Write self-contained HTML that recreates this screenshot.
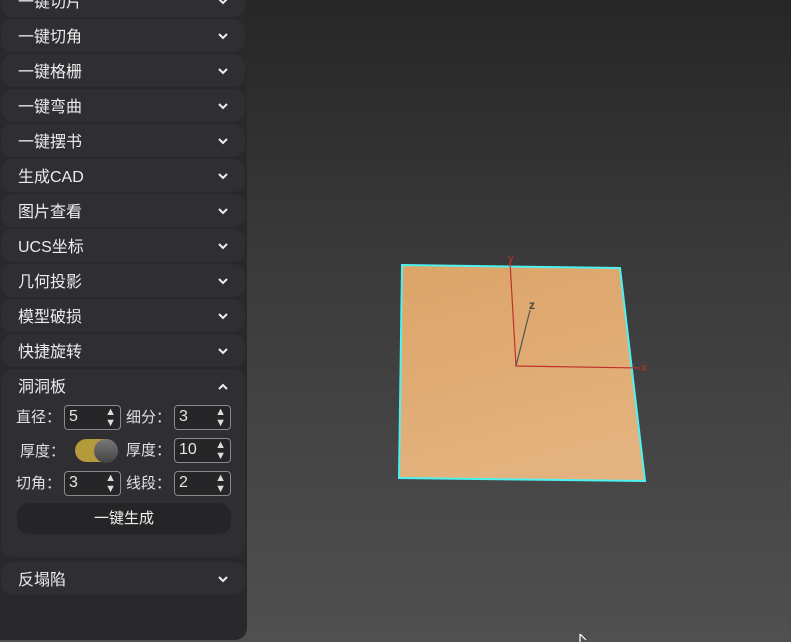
<!DOCTYPE html><html><head><meta charset="utf-8"><style>
body{margin:0;width:791px;height:642px;overflow:hidden;background:linear-gradient(#262626,#3a3a3a 40%,#505050);font-family:"Liberation Sans","Noto Sans CJK SC",sans-serif;position:relative}
.panel{position:absolute;left:0;top:-20px;width:247px;height:660px;background:#29292c;border-radius:0 0 12px 0}
.row{position:absolute;left:1px;width:244px;height:33px;background:#2f2f33;border-radius:12px;color:#ececec;font-size:16px}
.row span{position:absolute;left:17px;top:4px}
.row svg{position:absolute;right:17px;top:14px}
.exp{height:188px}
.lbl{position:absolute;color:#e0e0e0;font-size:15px}
.inp{position:absolute;width:55px;height:23px;border:1px solid #8a8a8a;border-radius:4px;background:#262628;color:#e6e6e6;font-size:16px}
.inp b{font-weight:normal;position:absolute;left:4px;top:2px}
.inp i{position:absolute;right:4px;top:1px;font-style:normal;font-size:11px;line-height:11px;color:#ddd}
.btn{position:absolute;left:16px;top:134px;width:214px;height:31px;background:#252527;border-radius:12px;color:#eee;font-size:15px;text-align:center;line-height:31px}
</style></head><body>
<div class="panel"></div>
<div class="row" style="top:-16px"><span>一键切片</span><svg width="10" height="7"><path d="M1 1l4 4 4-4" stroke="#eee" stroke-width="2" fill="none"/></svg></div>
<div class="row" style="top:19px"><span>一键切角</span><svg width="10" height="7"><path d="M1 1l4 4 4-4" stroke="#eee" stroke-width="2" fill="none"/></svg></div>
<div class="row" style="top:54px"><span>一键格栅</span><svg width="10" height="7"><path d="M1 1l4 4 4-4" stroke="#eee" stroke-width="2" fill="none"/></svg></div>
<div class="row" style="top:89px"><span>一键弯曲</span><svg width="10" height="7"><path d="M1 1l4 4 4-4" stroke="#eee" stroke-width="2" fill="none"/></svg></div>
<div class="row" style="top:124px"><span>一键摆书</span><svg width="10" height="7"><path d="M1 1l4 4 4-4" stroke="#eee" stroke-width="2" fill="none"/></svg></div>
<div class="row" style="top:159px"><span>生成CAD</span><svg width="10" height="7"><path d="M1 1l4 4 4-4" stroke="#eee" stroke-width="2" fill="none"/></svg></div>
<div class="row" style="top:194px"><span>图片查看</span><svg width="10" height="7"><path d="M1 1l4 4 4-4" stroke="#eee" stroke-width="2" fill="none"/></svg></div>
<div class="row" style="top:229px"><span>UCS坐标</span><svg width="10" height="7"><path d="M1 1l4 4 4-4" stroke="#eee" stroke-width="2" fill="none"/></svg></div>
<div class="row" style="top:264px"><span>几何投影</span><svg width="10" height="7"><path d="M1 1l4 4 4-4" stroke="#eee" stroke-width="2" fill="none"/></svg></div>
<div class="row" style="top:299px"><span>模型破损</span><svg width="10" height="7"><path d="M1 1l4 4 4-4" stroke="#eee" stroke-width="2" fill="none"/></svg></div>
<div class="row" style="top:334px"><span>快捷旋转</span><svg width="10" height="7"><path d="M1 1l4 4 4-4" stroke="#eee" stroke-width="2" fill="none"/></svg></div>
<div class="row exp" style="top:369px"><span>洞洞板</span><svg width="10" height="7"><path d="M1 6l4-4 4 4" stroke="#eee" stroke-width="2" fill="none"/></svg>
<div class="lbl" style="left:15px;top:37px">直径：</div>
<div class="inp" style="left:63px;top:36px"><b>5</b><i>▲<br>▼</i></div>
<div class="lbl" style="left:125px;top:37px">细分：</div>
<div class="inp" style="left:173px;top:36px"><b>3</b><i>▲<br>▼</i></div>
<div class="lbl" style="left:19px;top:71px">厚度：</div>
<div style="position:absolute;left:74px;top:70px;width:42px;height:23px;border-radius:12px;background:#b39a3a"></div>
<div style="position:absolute;left:93px;top:70px;width:24px;height:24px;border-radius:12px;background:linear-gradient(#777,#444)"></div>
<div class="lbl" style="left:125px;top:70px">厚度：</div>
<div class="inp" style="left:173px;top:69px"><b>10</b><i>▲<br>▼</i></div>
<div class="lbl" style="left:15px;top:103px">切角：</div>
<div class="inp" style="left:63px;top:102px"><b>3</b><i>▲<br>▼</i></div>
<div class="lbl" style="left:125px;top:103px">线段：</div>
<div class="inp" style="left:173px;top:102px"><b>2</b><i>▲<br>▼</i></div>
<div class="btn">一键生成</div>
</div>
<div class="row" style="top:562px"><span>反塌陷</span><svg width="10" height="7"><path d="M1 1l4 4 4-4" stroke="#eee" stroke-width="2" fill="none"/></svg></div>
<svg style="position:absolute;left:0;top:0" width="791" height="642">
<defs><linearGradient id="g" x1="0" y1="0" x2="0.3" y2="1"><stop offset="0" stop-color="#dba468"/><stop offset="1" stop-color="#e4b27e"/></linearGradient></defs>
<polygon points="402,265 620,268 645,481 399,478" fill="url(#g)" stroke="#4ef2f2" stroke-width="2"/>
<path d="M510,262 L516,366 L640,368" stroke="#c0302a" fill="none" stroke-width="1.2"/>
<path d="M516,366 L530,310" stroke="#555" stroke-width="1.2"/>
<text x="508" y="262" fill="#c0302a" font-size="11" font-family="Liberation Sans">y</text>
<text x="529" y="309" fill="#444" font-size="12" font-family="Liberation Sans" font-weight="bold">z</text>
<text x="641" y="371" fill="#c0302a" font-size="11" font-family="Liberation Sans">x</text>
<path d="M580,634 L580,642 M580,634 L586,640" stroke="#fff" stroke-width="1.2"/>
</svg>
</body></html>
